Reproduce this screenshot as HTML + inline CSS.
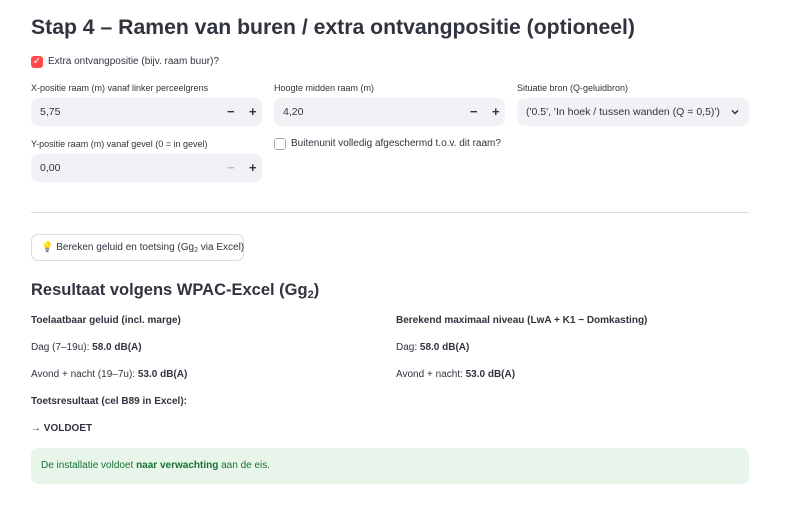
<!DOCTYPE html><html><head><style>
body{margin:0;width:800px;height:513px;background:#fff;font-family:"Liberation Sans",sans-serif;color:#31333f;position:relative;overflow:hidden}
.a{position:absolute;white-space:nowrap}
.lbl{font-size:9px}
.inp{position:absolute;height:28px;background:#f0f2f6;border-radius:7px;font-size:10.5px;line-height:28px;padding-left:9px;box-sizing:border-box}
.pm{position:absolute;top:0;font-size:13px;font-weight:bold}
.t{font-size:10px}
</style></head><body>
<div class="a" style="left:31px;top:16px;font-size:21.2px;font-weight:bold">Stap 4 – Ramen van buren / extra ontvangpositie (optioneel)</div>
<div class="a" style="left:31px;top:56px;width:12px;height:12px;background:#ff4b4b;border-radius:3px;color:#fff;font-size:10px;line-height:12px;text-align:center">✓</div>
<div class="a t" style="left:48px;top:56px">Extra ontvangpositie (bijv. raam buur)?</div>
<div class="a lbl" style="left:31px;top:83px">X-positie raam (m) vanaf linker perceelgrens</div>
<div class="a lbl" style="left:274px;top:83px">Hoogte midden raam (m)</div>
<div class="a lbl" style="left:517px;top:83px">Situatie bron (Q-geluidbron)</div>
<div class="inp" style="left:31px;top:98px;width:231px">5,75<span class="pm" style="left:196px">−</span><span class="pm" style="left:218px">+</span></div>
<div class="inp" style="left:274px;top:98px;width:231px">4,20<span class="pm" style="left:196px">−</span><span class="pm" style="left:218px">+</span></div>
<div class="inp" style="left:517px;top:98px;width:232px">('0.5', 'In hoek / tussen wanden (Q = 0,5)')<svg style="position:absolute;left:214px;top:11px" width="8" height="6" viewBox="0 0 8 6"><path d="M1 1.5L4 4.5L7 1.5" fill="none" stroke="#31333f" stroke-width="1.5"/></svg></div>
<div class="a lbl" style="left:31px;top:139px">Y-positie raam (m) vanaf gevel (0 = in gevel)</div>
<div class="inp" style="left:31px;top:154px;width:231px">0,00<span class="pm" style="left:196px;color:#bbb">−</span><span class="pm" style="left:218px">+</span></div>
<div class="a" style="left:274px;top:138px;width:10px;height:10px;border:1px solid #aaa;border-radius:3px"></div>
<div class="a t" style="left:291px;top:138px">Buitenunit volledig afgeschermd t.o.v. dit raam?</div>
<div class="a" style="left:31px;top:212px;width:718px;height:1px;background:#ddd"></div>
<div class="a t" style="left:31px;top:234px;width:213px;height:27px;border:1px solid #ddd;border-radius:7px;box-sizing:border-box;line-height:25px;padding-left:9px"><span style="color:#f5c842">💡</span> Bereken geluid en toetsing (Gg<span style="font-size:7px;vertical-align:-2px">2</span> via Excel)</div>
<div class="a" style="left:31px;top:281px;font-size:16.5px;font-weight:bold">Resultaat volgens WPAC-Excel (Gg<span style="font-size:11px;vertical-align:-3px">2</span>)</div>
<div class="a t" style="left:31px;top:315px;font-weight:bold">Toelaatbaar geluid (incl. marge)</div>
<div class="a t" style="left:396px;top:315px;font-weight:bold">Berekend maximaal niveau (LwA + K1 − Domkasting)</div>
<div class="a t" style="left:31px;top:342px">Dag (7–19u): <b>58.0 dB(A)</b></div>
<div class="a t" style="left:396px;top:342px">Dag: <b>58.0 dB(A)</b></div>
<div class="a t" style="left:31px;top:369px">Avond + nacht (19–7u): <b>53.0 dB(A)</b></div>
<div class="a t" style="left:396px;top:369px">Avond + nacht: <b>53.0 dB(A)</b></div>
<div class="a t" style="left:31px;top:396px;font-weight:bold">Toetsresultaat (cel B89 in Excel):</div>
<div class="a t" style="left:31px;top:423px;font-weight:bold">→ VOLDOET</div>
<div class="a t" style="left:31px;top:448px;width:718px;height:36px;background:#e8f5ea;border-radius:7px;color:#177233;line-height:36px;padding-left:10px;box-sizing:border-box">De installatie voldoet <b>naar verwachting</b> aan de eis.</div>
</body></html>
